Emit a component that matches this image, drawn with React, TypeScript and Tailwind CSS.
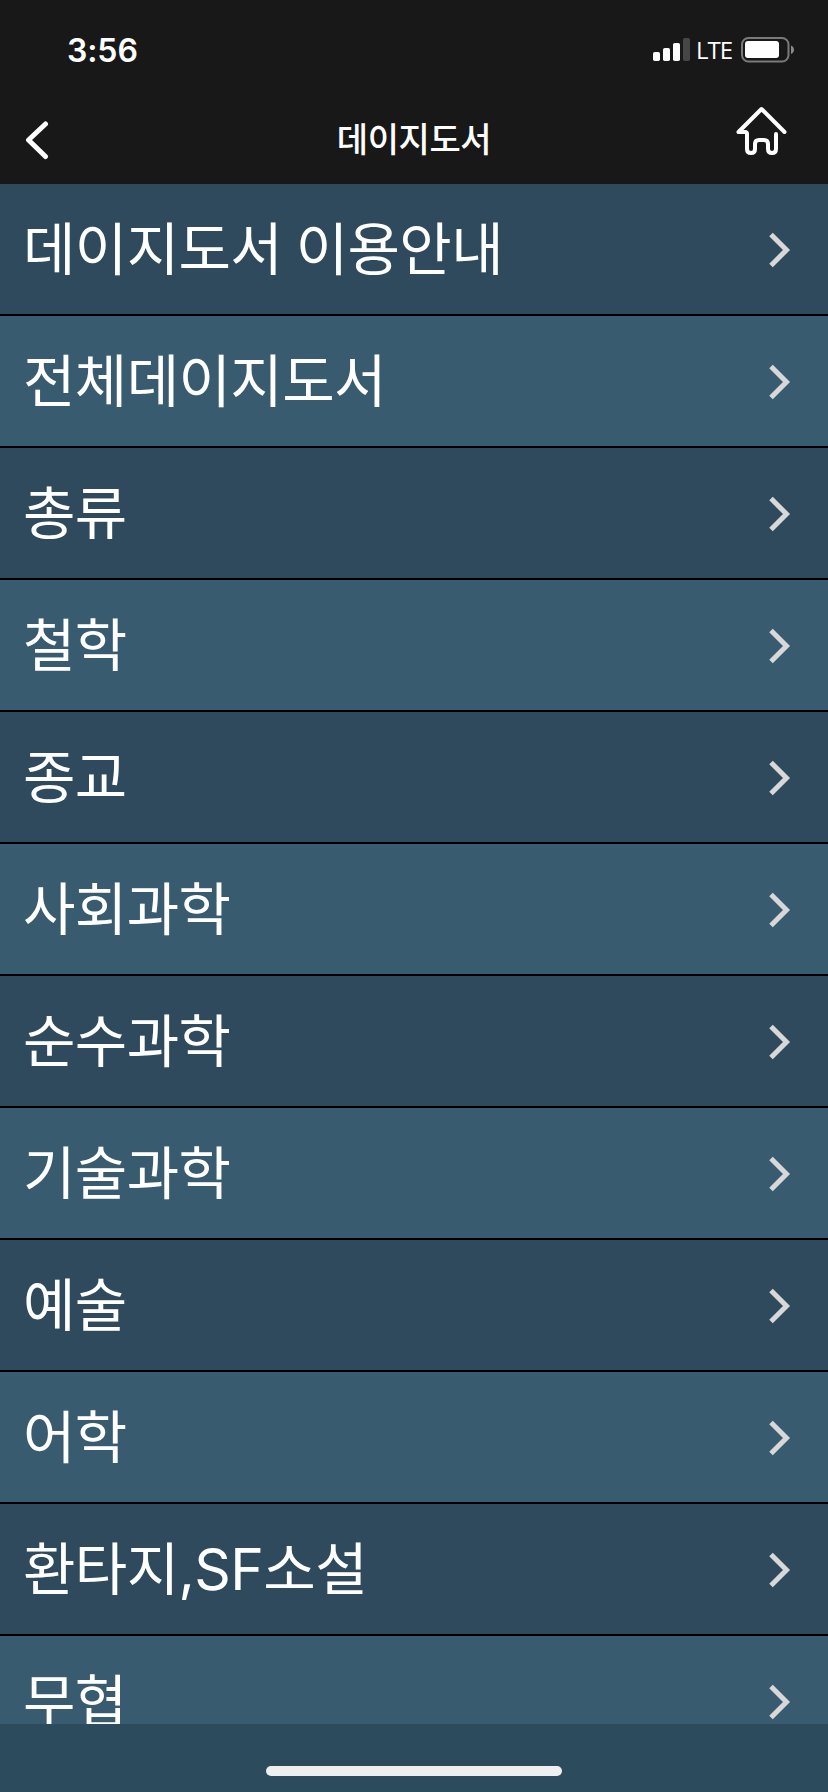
const categories = [
  '데이지도서 이용안내',
  '전체데이지도서',
  '총류',
  '철학',
  '종교',
  '사회과학',
  '순수과학',
  '기술과학',
  '예술',
  '어학',
  '환타지,SF소설',
  '무협',
]

const StatusBar = () => {
  return (
    <div className="h-[98px] pt-[2px] pl-[67px] pr-[33px] flex items-center justify-between text-white">
      <span className="pt-px text-[32px] leading-none font-semibold tracking-[-0.1px]">3:56</span>
      <div className="flex items-center">
        {/* Signal strength */}
        <svg width="38" height="24" viewBox="0 0 38 24" fill="currentColor">
          <rect x="0" y="14" width="7" height="9" rx="1.8" />
          <rect x="10" y="10" width="7" height="13" rx="1.8" />
          <rect x="20" y="5" width="7" height="18" rx="1.8" />
          <rect x="30" y="0" width="7" height="23" rx="1.8" fill="#464646" />
        </svg>
        <span className="ml-[5px] w-[45px] text-[24px] leading-none font-medium tracking-[-1px] font-['Open_Sans',sans-serif]">LTE</span>
        {/* Battery */}
        <svg width="54" height="26" viewBox="0 0 54 26">
          <rect x="1" y="1" width="46.5" height="23.5" rx="6.5" fill="none" stroke="#7a7a7a" strokeWidth="2" />
          <rect x="4" y="4" width="34" height="17" rx="3" fill="#fff" />
          <path d="M50 8.5c4 1.500 4 7 0 8.500z" fill="#8a8a8a" />
        </svg>
      </div>
    </div>
  )
}

const NavBar = () => {
  return (
    <div className="h-[86px] grid grid-cols-[200px_1fr_200px] text-white">
      <button className="pl-[25px] pt-[22px] flex items-start" aria-label="Back">
        <svg width="24" height="40" viewBox="0 0 24 40" fill="none" stroke="currentColor" strokeWidth="5" strokeLinecap="round" strokeLinejoin="round">
          <path d="M20.5 4L3.500 20L20.500 36.500" />
        </svg>
      </button>
      <h1 className="pt-[17px] text-center text-[34px] leading-[50px] font-medium tracking-[-0.4px]">데이지도서</h1>
      <button className="pr-[40px] pt-[7px] flex items-start justify-end" aria-label="Home">
        <svg width="52" height="52" viewBox="0 0 52 52" fill="none" stroke="currentColor" strokeWidth="4" strokeLinecap="round" strokeLinejoin="round">
          <path d="M48.500 27L25.500 4L2.500 27H9Q11 27 11 29V44Q11 48 15 48Q19 48 19 44V39Q19 35 23 35H28Q32 35 32 39V44Q32 48 36 48Q40 48 40 44V29" />
        </svg>
      </button>
    </div>
  )
}

const CategoryRow = ({ title }: { title: string }) => {
  return (
    <li className="h-[132px] shrink-0 pt-[2px] pl-[23px] pr-[36px] flex items-center justify-between border-b-2 border-black odd:bg-[#2e4a5c] even:bg-[#385b70]">
      <span className="text-[57px] leading-[84px] tracking-[-0.6px] [word-spacing:-2px] text-white whitespace-nowrap">{title}</span>
      <svg width="24" height="38" viewBox="0 0 24 38" fill="none" stroke="#d8d8d8" strokeWidth="5">
        <path d="M3 3.500L18.500 19L3 34.500" />
      </svg>
    </li>
  )
}

const App = () => {
  return (
    <div className="w-[828px] h-[1792px] flex flex-col overflow-hidden bg-[#2c4c5e] font-['Inter','Noto_Sans_CJK_KR',sans-serif]">
      <header className="h-[184px] shrink-0 bg-[#181818]">
        <StatusBar />
        <NavBar />
      </header>
      <ul className="h-[1540px] shrink-0 flex flex-col overflow-hidden">
        {categories.map((title) => (
          <CategoryRow key={title} title={title} />
        ))}
      </ul>
      {/* Home indicator */}
      <div className="h-[68px] pt-[42px] flex justify-center">
        <div className="w-[296px] h-[10px] rounded-full bg-[#efefef]" />
      </div>
    </div>
  )
}

export default App
